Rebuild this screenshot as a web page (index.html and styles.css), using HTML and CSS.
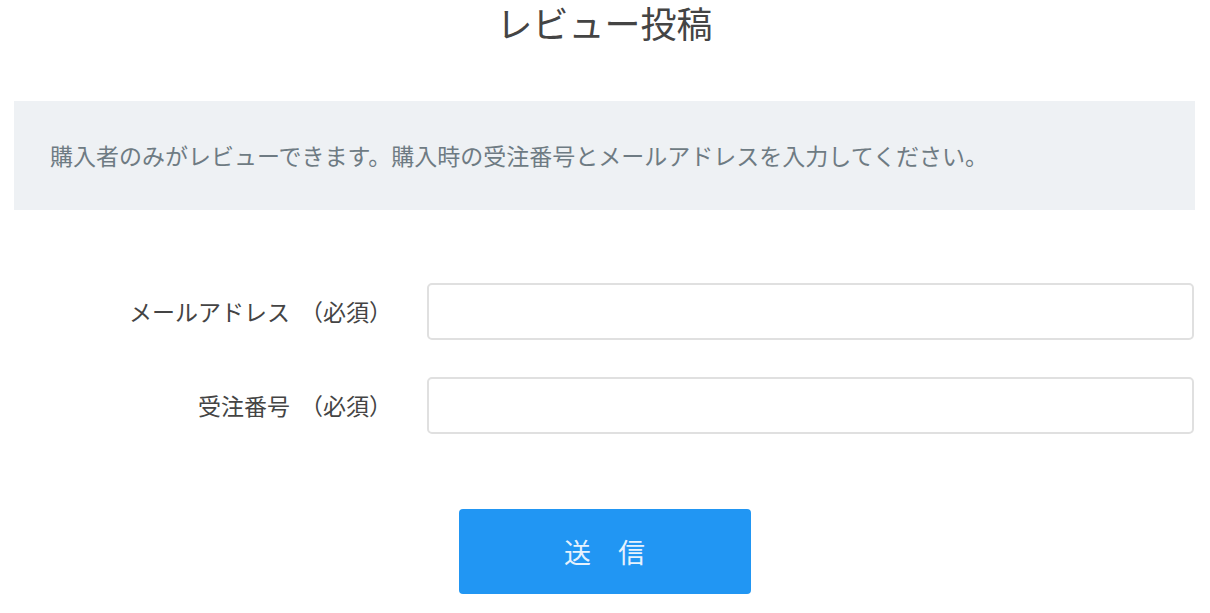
FILE: index.html
```html
<!DOCTYPE html>
<html lang="ja">
<head>
    <meta charset="UTF-8">
    <meta name="viewport" content="width=device-width, initial-scale=1.0">
    <title>レビュー投稿</title>
    <link rel="stylesheet" href="styles.css">
</head>
<body>
    <div class="container">
        <h1 class="page-title">レビュー投稿</h1>

        <div class="notice">
            <p>購入者のみがレビューできます。購入時の受注番号とメールアドレスを入力してください。</p>
        </div>

        <form class="review-form">
            <div class="form-row">
                <label for="email">メールアドレス<span class="required">（必須）</span></label>
                <input type="email" id="email">
            </div>
            <div class="form-row">
                <label for="order">受注番号<span class="required">（必須）</span></label>
                <input type="text" id="order">
            </div>
            <div class="form-actions">
                <button type="submit">送　信</button>
            </div>
        </form>
    </div>
</body>
</html>
```

FILE: styles.css
```css
/* Review form */
body {
    font-family: "Noto Sans CJK JP", "Noto Sans", sans-serif;
    background-color: #fff;
    color: #444;
    margin: 0;
    padding: 0;
}

.container {
    margin: 0 15px 0 14px;
}

.page-title {
    margin: 0;
    font-size: 36px;
    font-weight: normal;
    line-height: 1.25;
    text-align: center;
    color: #444;
}

.notice {
    margin-top: 56px;
    height: 109px;
    padding: 0 36px;
    display: flex;
    align-items: center;
    background-color: #eef1f4;
}

.notice p {
    margin: 0;
    font-size: 23px;
    line-height: 1.3;
    color: #6e7b83;
}

.review-form {
    margin-top: 73px;
    display: flex;
    flex-direction: column;
    gap: 37px;
}

.form-row {
    display: flex;
    align-items: center;
    gap: 35px;
}

.form-row label {
    flex: 0 0 378px;
    text-align: right;
    font-size: 23px;
    line-height: 1.3;
    color: #444;
}

.required {
    margin-left: 10px;
}

.form-row input {
    width: 767px;
    height: 57px;
    box-sizing: border-box;
    border: 2px solid #e0e0e0;
    border-radius: 5px;
    padding: 0 14px;
    font-size: 20px;
    font-family: inherit;
}

.form-actions {
    display: flex;
    justify-content: center;
    margin-top: 38px;
}

button {
    width: 292px;
    height: 85px;
    border: none;
    border-radius: 4px;
    background-color: #2196f3;
    color: #e6f2fd;
    font-family: inherit;
    font-size: 27px;
    cursor: pointer;
}

button:hover {
    background-color: #1e88e5;
}
```
